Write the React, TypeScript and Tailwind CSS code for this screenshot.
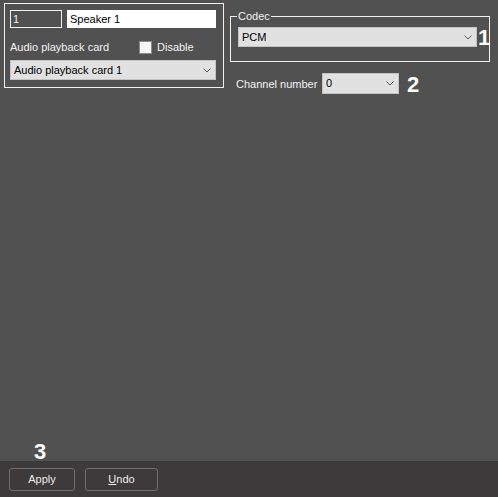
import React from "react";

function Chevron() {
  return (
    <svg width="8" height="5" viewBox="0 0 8 5" className="shrink-0">
      <path d="M0.5 0.5 L4 4 L7.5 0.5" fill="none" stroke="#5a5a5a" strokeWidth="1" />
    </svg>
  );
}

function Select({ value, className }: { value: string; className: string }) {
  return (
    <div
      className={
        "flex items-center justify-between bg-[#e1e1e1] border border-[#c4c4c4] pl-[3px] pr-[4px] text-black " +
        className
      }
    >
      <span>{value}</span>
      <Chevron />
    </div>
  );
}

export default function App() {
  return (
    <div className="w-[498px] h-[497px] bg-[#515151] flex flex-col relative font-['Liberation_Sans',Arial,sans-serif] text-[11px] leading-[13px] text-[#f2f2f2]">
      <div className="flex-1">
        <div className="flex items-start pl-[4px] pt-[3px] gap-[6px]">
          {/* Left group */}
          <div className="w-[220px] h-[85px] border border-[#f0f0f0] pl-[5px] pt-[6px] flex flex-col">
            <div className="flex gap-[5px]">
              <div className="w-[52px] h-[18px] border border-[#f0f0f0] flex items-center pl-[2px]">1</div>
              <div className="w-[149px] h-[18px] bg-white text-black flex items-center pl-[3px]">Speaker 1</div>
            </div>
            <div className="flex items-center h-[13px] mt-[13px]">
              <span className="w-[129px]">Audio playback card</span>
              <div className="w-[13px] h-[13px] bg-[#f6f6f6] border border-[#8c8c8c]" />
              <span className="ml-[5px]">Disable</span>
            </div>
            <Select value="Audio playback card 1" className="w-[206px] h-[20px] mt-[6px]" />
          </div>

          {/* Right column */}
          <div className="flex flex-col pt-[13px]">
            <div className="relative w-[260px] h-[46px] border border-[#f0f0f0]">
              <span className="absolute left-[6px] -top-[7px] px-[1px] bg-[#515151]">Codec</span>
              <Select value="PCM" className="w-[239px] h-[20px] ml-[7px] mt-[10px]" />
            </div>
            <div className="flex items-center mt-[11px]">
              <span className="w-[86px] pl-[6px] pt-[2px] box-content">Channel number</span>
              <Select value="0" className="w-[77px] h-[21px]" />
            </div>
          </div>
        </div>
      </div>

      <div className="h-[36px] bg-[#3c3a3a] flex items-start pt-[7px] pl-[9px] gap-[10px]">
        <button className="w-[66px] h-[23px] border border-[#6e6e6e] rounded-[3px] bg-[#3c3a3a] text-[#ececec] text-[11px] flex items-center justify-center">
          Apply
        </button>
        <button className="w-[73px] h-[23px] border border-[#6e6e6e] rounded-[3px] bg-[#3c3a3a] text-[#ececec] text-[11px] flex items-center justify-center">
          <span>
            <span className="underline">U</span>ndo
          </span>
        </button>
      </div>

      <span className="absolute left-[478px] top-[27px] text-[22px] leading-[22px] font-bold text-white">1</span>
      <span className="absolute left-[407px] top-[74px] text-[22px] leading-[22px] font-bold text-white">2</span>
      <span className="absolute left-[34px] top-[441px] text-[22px] leading-[22px] font-bold text-white">3</span>
    </div>
  );
}
